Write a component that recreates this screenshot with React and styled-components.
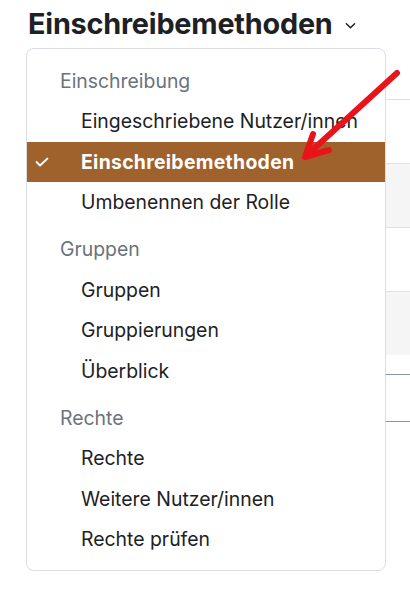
import React from "react";
import styled, { createGlobalStyle } from "styled-components";

const GlobalStyle = createGlobalStyle`
  html, body {
    margin: 0;
    padding: 0;
    background: #fff;
  }
  body {
    font-family: Inter, "Liberation Sans", sans-serif;
    color: #1d2125;
  }
`;

const groups = [
  {
    title: "Einschreibung",
    items: [
      { label: "Eingeschriebene Nutzer/innen" },
      { label: "Einschreibemethoden", active: true },
      { label: "Umbenennen der Rolle" },
    ],
  },
  {
    title: "Gruppen",
    items: [{ label: "Gruppen" }, { label: "Gruppierungen" }, { label: "Überblick" }],
  },
  {
    title: "Rechte",
    items: [
      { label: "Rechte" },
      { label: "Weitere Nutzer/innen" },
      { label: "Rechte prüfen" },
    ],
  },
];

const rows = [false, true, false, true];

export default function App() {
  return (
    <>
      <GlobalStyle />
      <Page>
        <TitleRow>
          <Title>Einschreibemethoden</Title>
          <Chevron viewBox="0 0 12 8">
            <path d="M1.5 1.5 L6 6 L10.5 1.5" />
          </Chevron>
        </TitleRow>
        <Content>
          <Table>
            {rows.map((striped, i) => (
              <Row key={i} $striped={striped} />
            ))}
          </Table>
          <Gap />
          <Rule />
          <Spacer />
          <Rule />
          <Menu>
            {groups.map((g) => (
              <Group key={g.title}>
                <Header>{g.title}</Header>
                {g.items.map((it) => (
                  <Item key={it.label} $active={it.active}>
                    {it.active && (
                      <Check viewBox="0 0 14 10">
                        <path d="M1.5 5 L5 8.5 L12.5 1.5" />
                      </Check>
                    )}
                    {it.label}
                  </Item>
                ))}
              </Group>
            ))}
          </Menu>
          <Arrow viewBox="0 0 110 110">
            <path d="M102 18 L12 100" />
            <path d="M18 79 L10 102 L34 95" />
          </Arrow>
        </Content>
      </Page>
    </>
  );
}

const Page = styled.div`
  width: 410px;
  height: 602px;
  overflow: hidden;
  position: relative;
`;

const TitleRow = styled.div`
  display: flex;
  align-items: center;
  height: 48px;
  padding-left: 28px;
  box-sizing: border-box;
  gap: 12px;
`;

const Title = styled.h2`
  margin: 0;
  font-size: 28.8px;
  font-weight: 700;
  letter-spacing: -0.2px;
  line-height: 44px;
  color: #1d2125;
`;

const Chevron = styled.svg`
  width: 11px;
  height: 8px;
  margin-top: 4px;
  fill: none;
  stroke: #1d2125;
  stroke-width: 1.6;
  stroke-linecap: round;
  stroke-linejoin: round;
`;

const Content = styled.div`
  position: relative;
  padding-top: 51px;
  padding-left: 28px;
`;

const Table = styled.div`
  display: flex;
  flex-direction: column;
`;

const Row = styled.div`
  height: 63px;
  border-top: 1px solid #dee2e6;
  background: ${(p) => (p.$striped ? "#f5f5f5" : "#fff")};
`;

const Gap = styled.div`
  height: 19px;
`;

const Rule = styled.div`
  height: 0;
  border-top: 1px solid #8f959e;
`;

const Spacer = styled.div`
  height: 46px;
`;

const Menu = styled.div`
  position: absolute;
  top: 0;
  left: 26px;
  width: 360px;
  height: 523px;
  box-sizing: border-box;
  background: #fff;
  border: 1px solid #dadde1;
  border-radius: 8px;
  padding: 11px 0 8px;
`;

const Group = styled.div`
  display: flex;
  flex-direction: column;
  & + & {
    margin-top: 6px;
  }
`;

const Header = styled.div`
  height: 41px;
  display: flex;
  align-items: center;
  padding-left: 33px;
  font-size: 19.4px;
  color: #6a737b;
`;

const Item = styled.div`
  position: relative;
  height: 40.5px;
  display: flex;
  align-items: center;
  padding-left: 54px;
  font-size: 19.4px;
  font-weight: ${(p) => (p.$active ? 700 : 400)};
  letter-spacing: ${(p) => (p.$active ? "0.3px" : "0")};
  color: ${(p) => (p.$active ? "#fff" : "#1d2125")};
  background: ${(p) => (p.$active ? "#a0622d" : "transparent")};
  white-space: nowrap;
`;

const Check = styled.svg`
  position: absolute;
  left: 8px;
  top: 15px;
  width: 14px;
  height: 10px;
  fill: none;
  stroke: #fff;
  stroke-width: 1.8;
  stroke-linecap: round;
  stroke-linejoin: round;
`;

const Arrow = styled.svg`
  position: absolute;
  left: 295px;
  top: 7px;
  width: 110px;
  height: 110px;
  fill: none;
  stroke: #e8141a;
  stroke-width: 6;
  stroke-linecap: round;
  stroke-linejoin: round;
`;
